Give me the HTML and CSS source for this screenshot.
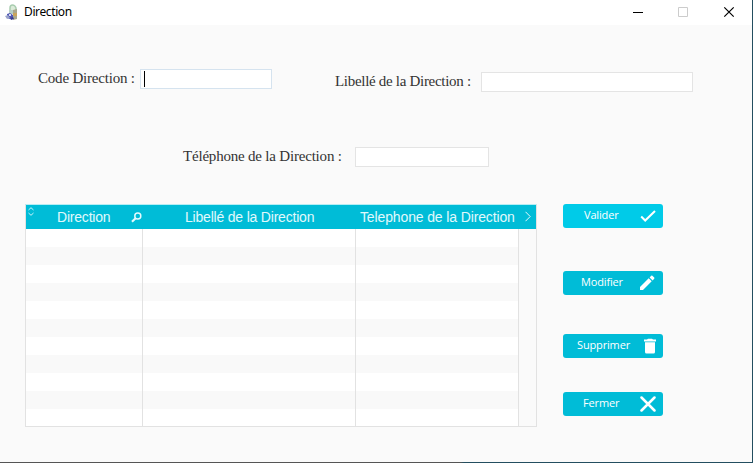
FILE: index.html
```
<!DOCTYPE html>
<html lang="fr">
<head>
<meta charset="utf-8">
<title>Direction</title>
<link rel="stylesheet" href="styles.css">
</head>
<body>
<div class="window">
  <header class="titlebar">
    <svg class="app-icon" width="14" height="17" viewBox="0 0 14 17">
      <path d="M5 7V4Q5 1 7.500 1T11 4v3" fill="#dcebd9" stroke="#a9cdb0" stroke-width="1.500"/>
      <path d="M8 6l4-1v10l-4 1z" fill="#a9a78c"/>
      <path d="M8 9h4v3H8z" fill="#c9a45c"/>
      <path d="M4 6h4v4H4z" fill="#b7cfc6"/>
      <path d="M2 10l3-1 3 2v3l-4 1-2-2z" fill="#5358b4"/>
      <path d="M0 12l3-1 2 3-3 1z" fill="#9aa3cb"/>
      <path d="M4 10h2v2H4z" fill="#d5dcf3"/>
      <path d="M5 14l3-1 1 2-3 1z" fill="#383d91"/>
    </svg>
    <h1 class="title">Direction</h1>
    <svg class="controls" width="104" height="12" viewBox="0 0 104 12" fill="none">
      <path d="M0 6.500h10" stroke="#000"/>
      <path d="M45.500 1.500h9v9h-9z" stroke="#ccc"/>
      <path d="M91.300 1.300l9.400 9.400M100.700 1.300l-9.400 9.400" stroke="#000" stroke-width="1.200"/>
    </svg>
  </header>
  <main class="content">
    <form class="form">
      <div class="form-row">
        <label class="label label-code">Code Direction :</label>
        <div class="input input-code"><span class="caret"></span></div>
        <label class="label label-name">Libellé de la Direction :</label>
        <div class="input input-name"></div>
      </div>
      <div class="form-row form-row-phone">
        <label class="label label-phone">Téléphone de la Direction :</label>
        <div class="input input-phone"></div>
      </div>
    </form>
    <div class="panel">
      <section class="table">
        <div class="table-head">
          <div class="th th-code">
            <svg class="sort" width="6" height="9" viewBox="0 0 6 9" fill="none" stroke="#c9f3f9"><path d="M.5 3L3 .7 5.500 3M.5 6L3 8.300 5.500 6"/></svg>
            <span class="th-text t-code">Direction</span>
            <svg class="search" width="11" height="11" viewBox="0 0 11 11" fill="none" stroke="#e4fafd"><circle cx="6.800" cy="4" r="3" stroke-width="1.500"/><path d="M4.600 6.300L1 9.800" stroke-width="2.200"/></svg>
          </div>
          <div class="th th-name"><span class="th-text t-name">Libellé de la Direction</span></div>
          <div class="th th-phone"><span class="th-text t-phone">Telephone de la Direction</span></div>
          <svg class="next" width="6" height="11" viewBox="0 0 6 11" fill="none" stroke="#e4fafd"><path d="M.5 .8L5.200 5.500 .5 10.200"/></svg>
        </div>
        <div class="table-body">
          <div class="col"></div>
          <div class="col"></div>
          <div class="col"></div>
          <div class="col col-end"></div>
        </div>
      </section>
      <nav class="actions">
        <button class="btn btn-save"><span class="b-save">Valider</span>
          <svg width="16" height="16" viewBox="0 0 16 16" fill="none" stroke="#fff" stroke-width="2"><path d="M1.200 8.500l4 4L15 3"/></svg></button>
        <button class="btn btn-edit"><span class="b-edit">Modifier</span>
          <svg width="16" height="16" viewBox="0 0 16 16" fill="#fff"><path d="M1 12L9.700 3.300l3 3L4 15H1zM10.600 2.400L12.200.8q.6-.5 1.200 0l1.800 1.800q.5.600 0 1.200L13.600 5.400z"/></svg></button>
        <button class="btn btn-delete"><span class="b-delete">Supprimer</span>
          <svg width="16" height="16" viewBox="0 0 16 16" fill="#fff"><path d="M4 1.500h3L8 .8h4l1 .7h3v2H4zM5 4.300h10V14q0 1.500-1.500 1.500h-7Q5 15.500 5 14z"/></svg></button>
        <button class="btn btn-close"><span class="b-close">Fermer</span>
          <svg width="16" height="16" viewBox="0 0 16 16" fill="none" stroke="#fff" stroke-width="2.500" stroke-linecap="round"><path d="M1.500 1.500l13 13M14.500 1.500l-13 13"/></svg></button>
      </nav>
    </div>
  </main>
</div>
</body>
</html>
```
FILE: styles.css
```
* { box-sizing: border-box; }
body { margin: 0; overflow: hidden; background: linear-gradient(90deg, #555 460px, #234e60 464px); }
.window {
  width: 753px;
  height: 462px;
  background: #fafafa;
  border-right: 1px solid #234e60;
}
.titlebar {
  display: flex;
  height: 25px;
  background: #fff;
}
.app-icon { margin: 4px 0 0 5px; }
.title {
  margin: 3px 0 0 5px;
  width: 609px;
  font: 12px/17px "Noto Sans", sans-serif;
  color: #000;
  letter-spacing: -0.38px;
}
.controls { margin-top: 6px; }
.form { height: 179px; padding-top: 44px; }
.form-row { display: flex; align-items: flex-start; height: 78px; }
.label {
  font: 15px/18px "Liberation Serif", serif;
  color: #333;
  white-space: nowrap;
}
.label-code { margin-left: 38px; width: 102px; letter-spacing: -0.2px; }
.label-name { margin: 3px 0 0 63px; width: 146px; letter-spacing: -0.3px; }
.label-phone { margin-left: 183px; width: 172px; letter-spacing: -0.2px; }
.input { height: 20px; background: #fff; border: 1px solid #e4e4e4; }
.input-code { width: 132px; border-color: #d5e3ef; padding: 1px 0 0 3px; }
.caret { display: block; width: 1px; height: 16px; background: #000; }
.input-name { width: 212px; margin-top: 3px; }
.input-phone { width: 134px; }
.panel { display: flex; align-items: flex-start; padding-left: 25px; }
.table {
  width: 512px;
  height: 223px;
  border: 1px solid #e2e2e2;
  border-top-color: #b5edf4;
}
.table-head { display: flex; height: 24px; background: #00bcd7; color: #e0f9fc; }
.th { display: flex; }
.th-code { width: 116px; }
.th-name { width: 213px; padding-left: 43px; }
.th-phone { width: 169px; padding-left: 5px; }
.th-text { font: 14px/24px "Liberation Sans", sans-serif; letter-spacing: -0.2px; white-space: nowrap; }
.t-phone { letter-spacing: -0.13px; }
.sort { margin: 2px 0 0 2px; }
.t-code { margin-left: 23px; width: 74px; }
.search { margin-top: 7px; }
.next { margin: 6px 0 0 1px; }
.table-body {
  display: grid;
  grid-template-columns: 117px 213px 163px 17px;
  height: 197px;
  background: repeating-linear-gradient(#fff 0 18px, #f9f9f9 18px 36px);
}
.col { border-right: 1px solid #e2e2e2; }
.col-end { border: 0; background: #fafafa; }
.actions { margin-left: 26px; }
.btn {
  display: flex;
  width: 100px;
  height: 24px;
  padding: 0;
  border: 0;
  border-radius: 3px;
  background: #00bcd7;
  color: #fff;
  font: 11px/22px "Open Sans", sans-serif;
  letter-spacing: -0.15px;
  text-align: left;
  white-space: nowrap;
}
.btn svg { margin-top: 4px; }
.btn-save { background: #00cbe8; }
.btn-edit { margin-top: 43px; }
.btn-delete { margin-top: 39px; }
.btn-close { margin-top: 34px; }
.b-save { margin-left: 21px; width: 56px; }
.b-edit { margin-left: 18px; width: 58px; }
.b-delete { margin-left: 14px; width: 63px; }
.b-close { margin-left: 20px; width: 57px; }
```
